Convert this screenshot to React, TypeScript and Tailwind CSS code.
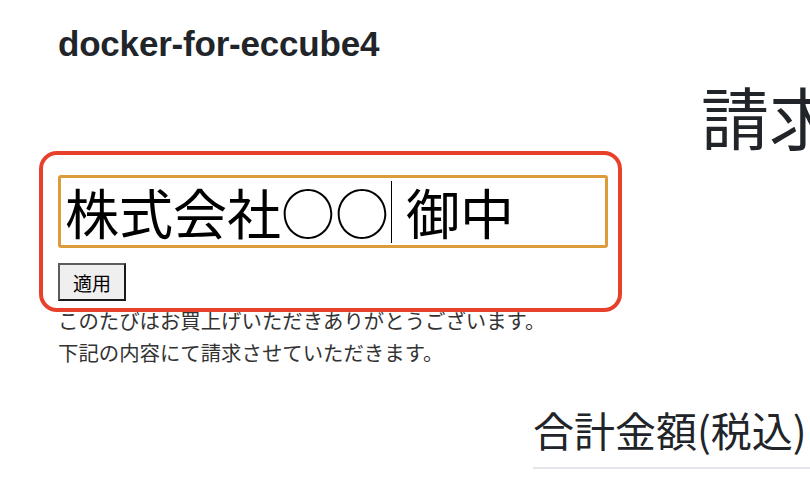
import React from "react";

const jp = { fontFamily: '"Noto Sans CJK JP", "Noto Sans", sans-serif' };
const latin = { fontFamily: '"Liberation Sans", Arial, sans-serif' };

function NameInput() {
  // focused text field with the caret after ○○
  return (
    <div className="flex h-[73px] w-[550px] items-center rounded-[3px] border-[3px] border-[#dd9c3c] bg-white pl-[4px] text-[54px] leading-none text-black whitespace-nowrap">
      <span>株式会社○○</span>
      <span className="mx-[2px] inline-block h-[62px] w-px bg-black" />
      <span>&nbsp;御中</span>
    </div>
  );
}

export default function App() {
  return (
    <div className="relative h-[486px] w-[810px] overflow-hidden bg-white text-[#212529]" style={jp}>
      <header className="pl-[58px] pt-[23px]">
        <div className="text-[35px] font-bold leading-[42px] tracking-[-0.2px] text-[#212529]" style={latin}>
          docker-for-eccube4
        </div>
      </header>

      <h1 className="mt-[17px] whitespace-nowrap pl-[701px] text-[68px] font-normal leading-[68px]">請求書</h1>

      <section className="pl-[58px] pt-[25px]">
        <div className="relative w-[550px]">
          <NameInput />
          <button className="mt-[15px] flex h-[38px] w-[68px] items-center justify-center border-2 border-t-[#5c5c5c] border-l-[#5c5c5c] border-r-[#1a1a1a] border-b-[#1a1a1a] bg-[#efefef] text-[19px] leading-none text-black">
            適用
          </button>
          <div className="pointer-events-none absolute -top-[24px] -right-[14px] -bottom-[11px] -left-[19px] rounded-[18px] border-4 border-[#e8412b]" />
        </div>

        <div className="mt-[3px] text-[20.4px] leading-[32px] text-[#333]">
          <p>このたびはお買上げいただきありがとうございます。</p>
          <p>下記の内容にて請求させていただきます。</p>
        </div>
      </section>

      <div className="mt-[37px] pl-[533px]">
        <h2 className="whitespace-nowrap border-b-2 border-[#e3e6ea] pb-[14px] text-[41px] font-normal leading-[48px]">
          合計金額(税込)
        </h2>
      </div>
    </div>
  );
}
